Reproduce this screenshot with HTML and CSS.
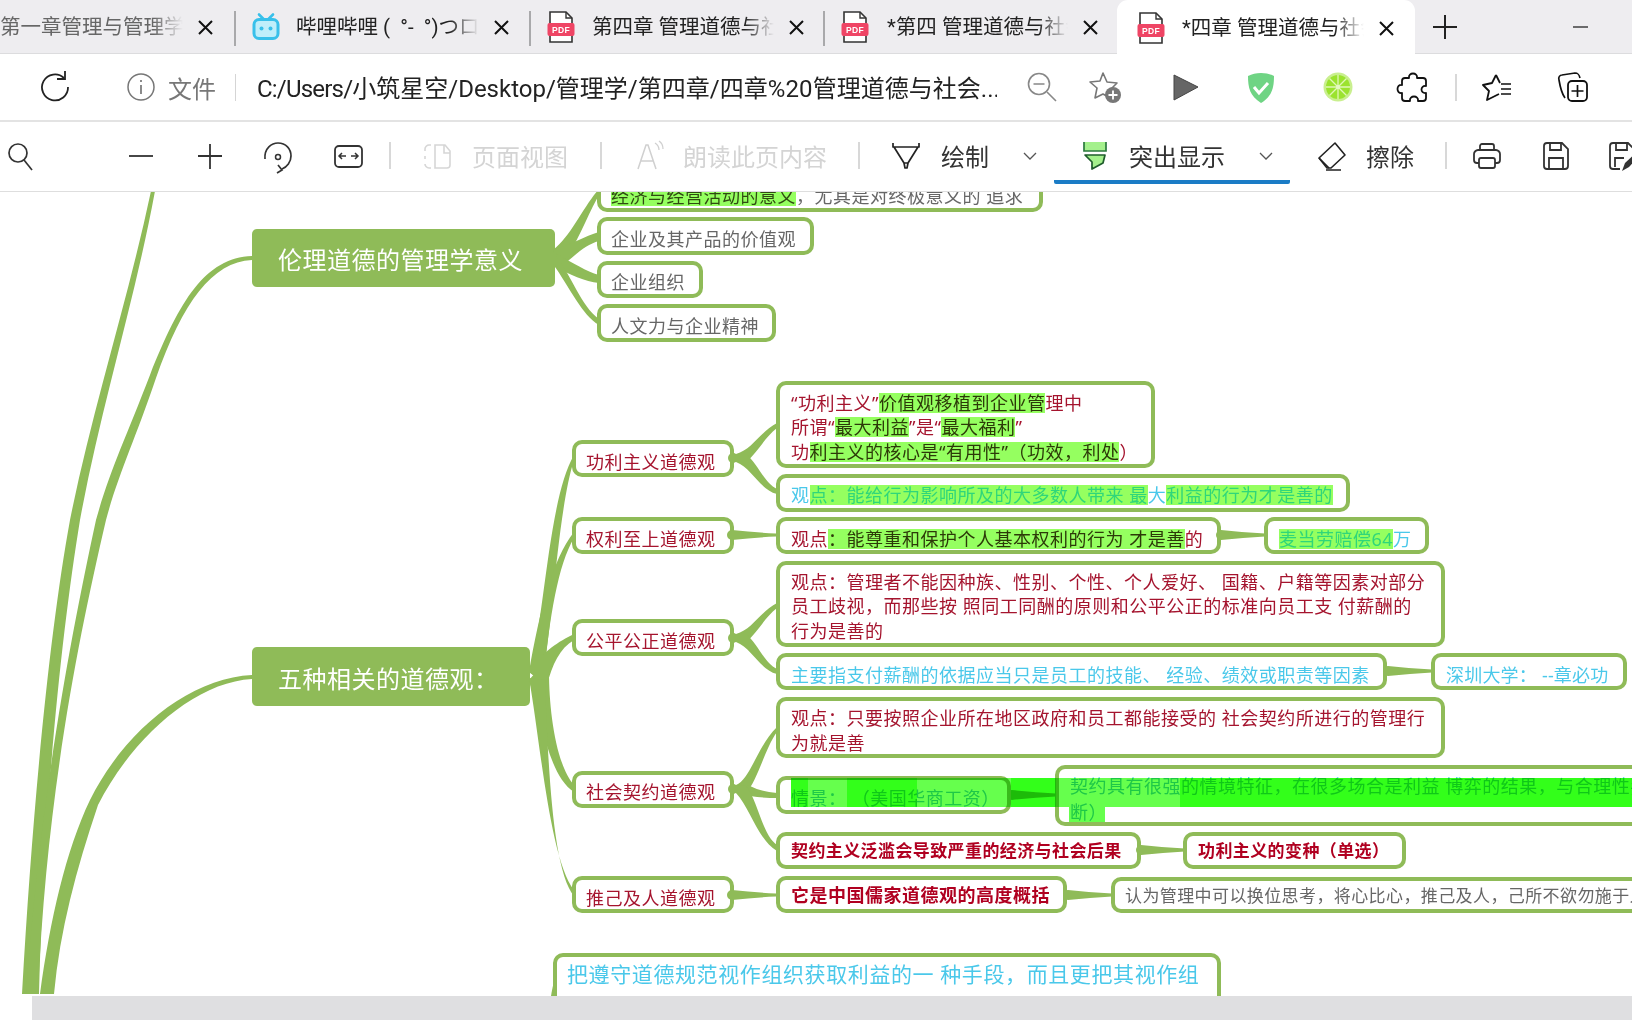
FILE: index.html
```html
<!DOCTYPE html>
<html lang="zh-CN">
<head>
<meta charset="utf-8">
<title>四章 管理道德与社会责任</title>
<link rel="stylesheet" href="styles.css">
</head>
<body>
<div class="app">
  <svg class="defs" width="0" height="0">
    <defs>
      <g id="pdf">
        <path d="M3 1h16l6 6v24H3z" fill="#fff" stroke="#333" stroke-width="1.6"/>
        <path d="M19 1v6h6" fill="none" stroke="#333" stroke-width="1.4"/>
        <rect x="0.5" y="12" width="27" height="13" rx="2" fill="#ef4565"/>
        <text x="14" y="22" class="pdf-text">PDF</text>
      </g>
      <path id="x" d="M1 1l13 13M14 1L1 14" fill="none" stroke="#111" stroke-width="2"/>
      <path id="chev" d="M14 17l6 6 6-6" fill="none" stroke="#555" stroke-width="1.3"/>
    </defs>
  </svg>

  <header class="tabstrip">
    <div class="tab tab-first">
      <span class="title title-dim">第一章管理与管理学概述与管理</span>
      <svg class="close" viewBox="0 0 15 15"><use href="#x"/></svg>
    </div>
    <div class="tab tab-b">
      <svg class="favicon" viewBox="0 0 28 31">
        <path d="M7 3l5 5M21 3l-5 5" stroke="#38c0ea" stroke-width="2.6" stroke-linecap="round"/>
        <rect x="2" y="8" width="24" height="19" rx="5" fill="#bfeefa" stroke="#38c0ea" stroke-width="3"/>
        <circle cx="9.5" cy="17" r="2" fill="#38c0ea"/><circle cx="18.5" cy="17" r="2" fill="#38c0ea"/>
      </svg>
      <span class="title">哔哩哔哩 ( &nbsp;°- &nbsp;°)つロ 干杯~-bilibili</span>
      <svg class="close" viewBox="0 0 15 15"><use href="#x"/></svg>
    </div>
    <div class="tab tab-c">
      <svg class="favicon" viewBox="0 0 28 32"><use href="#pdf"/></svg>
      <span class="title">第四章 管理道德与社会责任</span>
      <svg class="close" viewBox="0 0 15 15"><use href="#x"/></svg>
    </div>
    <div class="tab tab-d">
      <svg class="favicon" viewBox="0 0 28 32"><use href="#pdf"/></svg>
      <span class="title">*第四 管理道德与社会责任</span>
      <svg class="close" viewBox="0 0 15 15"><use href="#x"/></svg>
    </div>
    <div class="tab tab-active">
      <svg class="favicon" viewBox="0 0 28 32"><use href="#pdf"/></svg>
      <span class="title">*四章 管理道德与社会责任</span>
      <svg class="close" viewBox="0 0 15 15"><use href="#x"/></svg>
    </div>
    <svg class="ico new-tab" viewBox="0 0 40 40"><path d="M20 8v24M8 20h24" stroke="#222" stroke-width="2"/></svg>
    <svg class="ico minimize" viewBox="0 0 40 40"><path d="M13 20h15" stroke="#333" stroke-width="1.4"/></svg>
  </header>

  <nav class="addr">
    <svg class="ico a-reload" viewBox="0 0 40 40"><path d="M29 11A13 13 0 1 0 33 20" fill="none" stroke="#222" stroke-width="1.8"/><path d="M30 4v8h-8" fill="none" stroke="#222" stroke-width="1.8"/></svg>
    <svg class="ico a-info" viewBox="0 0 40 40"><circle cx="20" cy="20" r="13" fill="none" stroke="#777" stroke-width="1.5"/><path d="M20 18v9M20 13v2" stroke="#777" stroke-width="1.7"/></svg>
    <span class="a-file">文件</span>
    <span class="vline a-sep1"></span>
    <span class="url"><span class="url-tight">C:/Users/</span>小筑星空/Desktop/管理学/第四章/四章<span class="url-wide">%20</span>管理道德与社会...</span>
    <svg class="ico a-zoom" viewBox="0 0 40 40"><circle cx="17" cy="17" r="10.5" fill="none" stroke="#888" stroke-width="1.6"/><path d="M11.5 17h11M25 25l9 9" stroke="#888" stroke-width="1.6"/></svg>
    <svg class="ico a-star" viewBox="0 0 40 40"><path d="M18 6l4 9 10 1-7 7 2 9-9-5-8 4 2-10-7-6 10-1z" fill="none" stroke="#777" stroke-width="1.6" stroke-linejoin="round"/><circle cx="28" cy="28" r="8" fill="#777"/><path d="M28 23.500v9M23.500 28h9" stroke="#fff" stroke-width="1.8"/></svg>
    <svg class="ico a-play" viewBox="0 0 40 40"><path d="M8 8l24 12L8 33z" fill="#666" stroke="#444" stroke-width="1"/></svg>
    <svg class="ico a-shield" viewBox="0 0 40 40"><path d="M20 6c5 0 9 1 13 3 0 12-2 20-13 27C9 29 7 21 7 9c4-2 8-3 13-3z" fill="#6fd484"/><path d="M13 20l5 6 9-10" fill="none" stroke="#fff" stroke-width="3"/></svg>
    <svg class="ico a-lime" viewBox="0 0 40 40"><circle cx="20" cy="20" r="14.500" fill="#c9ef8f"/><circle cx="20" cy="20" r="12" fill="#9be32f"/><path d="M20 8v24M8 20h24M11.500 11.500l17 17M28.500 11.500l-17 17" stroke="#e0f7b8" stroke-width="1.300"/><circle cx="20" cy="20" r="2" fill="#e6f9c4"/></svg>
    <svg class="ico a-puzzle" viewBox="0 0 40 40"><path d="M16 11c-1-6 9-6 8 0h6c2 0 3 1 3 3v5c-6-1-6 8 0 7v5c0 2-1 3-3 3h-5c1-6-9-6-8 0h-5c-2 0-3-1-3-3v-5c-6 1-6-9 0-8v-4c0-2 1-3 3-3z" fill="none" stroke="#111" stroke-width="1.8" stroke-linejoin="round"/></svg>
    <span class="vline vline-wide a-sep2"></span>
    <svg class="ico a-fav" viewBox="0 0 40 40"><path d="M19 8L15 16 6 18 12 24 10 33 22 27M19 8L23 16" fill="none" stroke="#111" stroke-width="1.8" stroke-linejoin="round"/><path d="M24 17h10M24 22h10M24 27h10" stroke="#111" stroke-width="1.6"/></svg>
    <svg class="ico a-coll" viewBox="0 0 40 40"><path d="M12 31c-3-4-5-12-6-18-1-3 1-5 3-5l13-2c3 0 4 1 5 5" fill="none" stroke="#111" stroke-width="1.7"/><rect x="15" y="14" width="19" height="20" rx="4" fill="#fff" stroke="#111" stroke-width="1.8"/><path d="M24.500 18v12M18.500 24h12" stroke="#111" stroke-width="1.7"/></svg>
  </nav>

  <nav class="tools">
    <svg class="ico t-search" viewBox="0 0 40 40"><circle cx="18" cy="17" r="9" fill="none" stroke="#333" stroke-width="1.7"/><path d="M24 24l8 10" stroke="#333" stroke-width="1.7"/></svg>
    <svg class="ico t-minus" viewBox="0 0 40 40"><path d="M8 20h24" stroke="#333" stroke-width="1.8"/></svg>
    <svg class="ico t-plus" viewBox="0 0 40 40"><path d="M20 8v25M8 20h24" stroke="#333" stroke-width="1.8"/></svg>
    <svg class="ico t-rotate" viewBox="0 0 40 40"><path d="M7 23C6 12 14 7 20 7c8 0 13 6 13 13 0 6-4 11-9 13" fill="none" stroke="#333" stroke-width="1.7"/><circle cx="20" cy="21" r="2.500" fill="none" stroke="#333" stroke-width="1.500"/><path d="M20 29l4 5-5 3" fill="none" stroke="#333" stroke-width="1.700"/></svg>
    <svg class="ico t-fit" viewBox="0 0 40 40"><rect x="7" y="10" width="27" height="21" rx="4" fill="none" stroke="#333" stroke-width="1.800"/><path d="M12 20h6M23 20h6M14 17l-3 3 3 3M27 17l3 3-3 3" fill="none" stroke="#333" stroke-width="1.500"/></svg>
    <span class="vline vline-wide t-sep1"></span>
    <svg class="ico t-page" viewBox="0 0 40 40"><path d="M14 9h-2c-2 0-4 2-4 4v2M8 20v3M8 28c0 2 2 4 4 4h2M18 9h10l5 6v14c0 2-1 3-3 3H18zM27 9v8h6" fill="none" stroke="#d6d6d6" stroke-width="1.600"/></svg>
    <span class="t-text t-off t-pagetext">页面视图</span>
    <span class="vline vline-wide t-sep2"></span>
    <svg class="ico t-read" viewBox="0 0 40 40"><path d="M8 33L16 9h2l8 24M11 25h12" fill="none" stroke="#d0d0d0" stroke-width="1.500"/><path d="M25 7c3 2 4 4 4 7M29 5c3 2 4 5 4 8" fill="none" stroke="#d0d0d0" stroke-width="1.300"/></svg>
    <span class="t-text t-off t-readtext">朗读此页内容</span>
    <span class="vline vline-wide t-sep3"></span>
    <svg class="ico t-draw" viewBox="0 0 40 40"><path d="M7 7v4h26V7M8 11l10 16h4l10-16M18 27l1 5h2l1-5" fill="none" stroke="#222" stroke-width="1.700" stroke-linejoin="round"/></svg>
    <span class="t-text t-drawtext">绘制</span>
    <svg class="ico t-chev1" viewBox="0 0 40 40"><use href="#chev"/></svg>
    <div class="hl-group">
      <svg class="ico t-high" viewBox="0 0 40 40"><path d="M9 6h22v9H9z" fill="#a4f08c"/><path d="M9 6v9h22V6" fill="none" stroke="#2b7a3e" stroke-width="1.700"/><path d="M10 19h20l-2 8-11 6v-7z" fill="#a4f08c" stroke="#1f5c2c" stroke-width="1.700" stroke-linejoin="round"/></svg>
      <span class="t-text t-hightext">突出显示</span>
      <svg class="ico t-chev2" viewBox="0 0 40 40"><use href="#chev"/></svg>
      <span class="hl-bar"></span>
    </div>
    <svg class="ico t-erase" viewBox="0 0 40 40"><path d="M7 22L23 7l10 12-14 13h-4z" fill="none" stroke="#222" stroke-width="1.600" stroke-linejoin="round"/><path d="M7 22l10 10M14 34h15" stroke="#222" stroke-width="1.600"/></svg>
    <span class="t-text t-erasetext">擦除</span>
    <span class="vline vline-wide t-sep4"></span>
    <svg class="ico t-print" viewBox="0 0 40 40"><path d="M13 14V10c0-1 1-2 2-2h10c1 0 2 1 2 2v4M12 27H10c-2 0-3-1-3-3V18c0-2 2-4 4-4h18c2 0 4 2 4 4v6c0 2-1 3-3 3h-2" fill="none" stroke="#333" stroke-width="1.800"/><rect x="12" y="22" width="16" height="10" rx="2" fill="none" stroke="#333" stroke-width="1.800"/></svg>
    <svg class="ico t-save" viewBox="0 0 40 40"><path d="M8 10c0-2 1-3 3-3h15l6 6v17c0 2-1 3-3 3H11c-2 0-3-1-3-3z" fill="none" stroke="#333" stroke-width="1.800"/><path d="M14 7v7h11V7M13 33V22h14v11" fill="none" stroke="#333" stroke-width="1.800"/></svg>
    <svg class="ico t-saveas" viewBox="0 0 40 40"><path d="M18 33h-7c-2 0-3-1-3-3V10c0-2 1-3 3-3h15l6 6v5" fill="none" stroke="#333" stroke-width="1.800"/><path d="M14 7v7h11V7M13 31V22h9" fill="none" stroke="#333" stroke-width="1.800"/><path d="M20 35l3-8 12-11 3 3-11 12z" fill="#333"/></svg>
  </nav>

  <main class="viewer">
    <div class="map">
      <div class="node gray n0"><span class="ln"><span class="hl hl-gray">经济与经营活动的意义</span>，尤其是对终极意义的 追求</span></div>
      <div class="node gray n1"><span class="ln">企业及其产品的价值观</span></div>
      <div class="node gray n2"><span class="ln">企业组织</span></div>
      <div class="node gray n3"><span class="ln">人文力与企业精神</span></div>
      <div class="main-node m1">伦理道德的管理学意义</div>
      <div class="main-node m2">五种相关的道德观：</div>

      <div class="node red c1"><span class="ln">功利主义道德观</span></div>
      <div class="node red c2"><span class="ln">权利至上道德观</span></div>
      <div class="node red c3"><span class="ln">公平公正道德观</span></div>
      <div class="node red c4"><span class="ln">社会契约道德观</span></div>
      <div class="node red c5"><span class="ln">推己及人道德观</span></div>

      <div class="node red d1">
        <span class="ln">“功利主义”<span class="hl">价值观移植到企业管</span>理中</span>
        <span class="ln">所谓“<span class="hl">最大利益</span>”是“<span class="hl">最大福利</span>”</span>
        <span class="ln">功<span class="hl">利主义的核心是“有用性”（功效，利处</span>）</span>
      </div>
      <div class="node cyan d2"><span class="ln">观<span class="hl hl-cyan">点：能给行为影响所及的大多数人带来 最</span>大<span class="hl hl-cyan">利益的行为才是善的</span></span></div>
      <div class="node red d3"><span class="ln">观点<span class="hl">：能尊重和保护个人基本权利的行为 才是善</span>的</span></div>
      <div class="node cyan d4"><span class="ln"><span class="hl hl-cyan">麦当劳赔偿64</span>万</span></div>
      <div class="node red d5">
        <span class="ln">观点：管理者不能因种族、性别、个性、个人爱好、 国籍、户籍等因素对部分</span>
        <span class="ln">员工歧视，而那些按 照同工同酬的原则和公平公正的标准向员工支 付薪酬的</span>
        <span class="ln">行为是善的</span>
      </div>
      <div class="node cyan d6"><span class="ln">主要指支付薪酬的依据应当只是员工的技能、 经验、绩效或职责等因素</span></div>
      <div class="node cyan d7"><span class="ln">深圳大学： --章必功</span></div>
      <div class="node red d8">
        <span class="ln">观点：只要按照企业所在地区政府和员工都能接受的 社会契约所进行的管理行</span>
        <span class="ln">为就是善</span>
      </div>
      <div class="node cyan d9"><span class="ln">情景： （美国华商工资）</span></div>
      <div class="node cyan d10">
        <span class="ln">契约具有很强的情境特征，在很多场合是利益 博弈的结果，与合理性判</span>
        <span class="ln">断）</span>
      </div>
      <div class="node red bold tight d11"><span class="ln">契约主义泛滥会导致严重的经济与社会后果</span></div>
      <div class="node red bold tight d12"><span class="ln">功利主义的变种（单选）</span></div>
      <div class="node red bold d13"><span class="ln">它是中国儒家道德观的高度概括</span></div>
      <div class="node gray bold-pad tight d14"><span class="ln">认为管理中可以换位思考，将心比心，推己及人，己所不欲勿施于人</span></div>
      <div class="node cyan big d15"><span class="ln">把遵守道德规范视作组织获取利益的一 种手段，而且更把其视作组</span></div>

      <svg class="branches" width="1632" height="1020" viewBox="0 0 1632 1020">
        <defs>
          <path id="wedge" d="M0 -5Q22 -2.500 44 -1.500L44 1.500Q22 2.500 0 5A5 5 0 0 1 0 -5Z"/>
          <g id="fan">
            <circle cx="733" cy="458" r="5"/>
            <path d="M736 454C752 450 760 432 777 423L777 428C765 437 758 452 746 462L736 462Z"/>
            <path d="M736 454L746 454C758 464 765 484 777 489L777 494C760 490 752 468 736 462Z"/>
          </g>
        </defs>
        <path d="M151 191C128 300 92 410 70 520C50 630 33 800 22 994L39 994C44 800 62 630 80 520C100 410 135 300 155 191Z"/>
        <path d="M252 256C205 258 180 300 150 375C125 440 110 470 96 520C70 640 40 800 26 994L38 994C46 800 78 640 106 520C118 475 135 440 156 378C183 302 212 262 252 260Z"/>
        <path d="M252 675C190 678 125 730 90 800C66 850 50 920 40 994L54 994C60 930 76 870 98 805C132 738 195 682 252 679Z"/>

        <path d="M553 250C572 235 584 205 600 188L601 192C588 212 578 245 560 266Z"/>
        <path d="M553 250C570 245 585 236 599 232L599 241C585 245 575 255 560 268Z"/>
        <path d="M553 252C572 262 585 271 599 275L599 283C585 282 570 274 553 266Z"/>
        <path d="M553 252C572 275 580 305 599 319L599 325C582 315 570 288 553 264Z"/>

        <path d="M529 672C545 620 548 500 574 455L574 460C558 510 553 620 542 682Z"/>
        <path d="M529 672C540 610 552 560 574 532L574 538C558 565 550 615 543 682Z"/>
        <path d="M529 670C545 650 558 642 574 634L574 640C560 648 552 665 547 685Z"/>
        <path d="M536 672L549 672C549 710 556 765 574 785L574 792C548 775 542 720 529 680Z"/>
        <path d="M529 678C540 740 550 860 574 890L574 896C552 870 548 760 545 680Z"/>

        <use href="#fan"/>
        <use href="#fan" transform="translate(0 180)"/>
        <circle cx="733" cy="789" r="5"/>
        <path d="M736 785C750 780 758 745 777 727L777 732C765 748 758 780 746 793L736 793Z"/>
        <path d="M736 785L750 786C758 790 766 792 777 793L777 798C766 798 750 797 736 793Z"/>
        <path d="M736 786L746 786C758 800 762 835 777 845L777 851C758 840 750 808 736 793Z"/>

        <use href="#wedge" transform="translate(732 535)"/>
        <use href="#wedge" transform="translate(1221 535)"/>
        <use href="#wedge" transform="translate(1388 671)"/>
        <use href="#wedge" transform="translate(1141 850)"/>
        <use href="#wedge" transform="translate(732 895)"/>
        <use href="#wedge" transform="translate(1068 895)"/>
        <use href="#wedge" transform="translate(1012 795)"/>
        <path d="M556 976C553 984 552 990 551 996L556 996L556 976Z"/>
      </svg>

      <span class="band b-dark b1"></span>
      <span class="band b-light b2"></span>
      <span class="band b-dark b3"></span>
      <span class="band b-light b4"></span>
      <span class="band b-dark b5"></span>
      <span class="band b-light b6"></span>
      <span class="band b-dark b7"></span>
      <span class="band b-light b8"></span>
    </div>
  </main>
  <footer class="scrollbar"></footer>
</div>
</body>
</html>
```

FILE: styles.css
```css
* { box-sizing: border-box; }
html, body { margin: 0; padding: 0; background: #fff; }
body { font-family: "Noto Sans", "Noto Sans CJK SC", sans-serif; color: #222; text-spacing-trim: space-all; }
.app { width: 1632px; height: 1020px; overflow: hidden; display: flex; flex-direction: column; }
.defs { position: absolute; }
.pdf-text { font: 700 8.500px "Liberation Sans", sans-serif; fill: #fff; text-anchor: middle; letter-spacing: .4px; }
.ico { width: 40px; height: 40px; flex: none; display: block; }

/* tab strip */
.tabstrip { height: 54px; flex: none; background: #eeedf0; border-bottom: 1px solid #dcdcde; display: flex; align-items: center; }
.tab { height: 54px; flex: none; display: flex; align-items: center; padding-left: 17px; position: relative; }
.tab-first { width: 234px; padding-left: 0; }
.tab-b, .tab-c, .tab-d { border-left: 2px solid #a9a9ab; border-image: linear-gradient(to bottom, transparent 12px, #a9a9ab 12px, #a9a9ab 45px, transparent 45px) 1; padding-left: 16px; }
.tab-b { width: 295px; }
.tab-c { width: 294px; }
.tab-d { width: 294px; }
.tab-active { width: 298px; padding-left: 20px; background: #fff; border-radius: 11px 11px 0 0; align-self: flex-start; height: 55px; }
.favicon { width: 28px; height: 32px; flex: none; margin-right: 16px; }
.title { width: 183px; flex: none; font-family: Roboto, "Noto Sans CJK SC", sans-serif; font-size: 20.500px; line-height: 30px; white-space: nowrap; overflow: hidden; color: #222;
  -webkit-mask-image: linear-gradient(to right, #000 84%, transparent 100%); mask-image: linear-gradient(to right, #000 84%, transparent 100%); }
.tab-c .title { padding-left: 1px; }
.tab-d .title { padding-left: 2px; }
.tab-active .title { padding-left: 1px; }
.title-dim { color: #666; }
.close { width: 15px; height: 15px; flex: none; margin-left: 15px; margin-top: 2px; }
.new-tab { margin-left: 10px; }
.minimize { margin-left: 95px; }

/* address bar */
.addr { height: 68px; flex: none; display: flex; align-items: center; border-bottom: 2px solid #e3e3e3; background: #fff; font-size: 24px; }
.vline { width: 1px; height: 27px; flex: none; background: #d5d5d5; }
.vline-wide { width: 2px; height: 27px; background: #d8d8d8; }
.a-reload { margin-left: 35px; }
.a-info { margin-left: 46px; }
.a-file { margin-left: 7px; width: 49px; color: #777; white-space: nowrap; }
.a-sep1 { margin-left: 18px; }
.url { margin: 0 0 2px 21px; width: 740px; white-space: nowrap; overflow: hidden; color: #222; font-family: Roboto, "Noto Sans CJK SC", sans-serif; }
.url-tight { letter-spacing: -.8px; }
.url-wide { letter-spacing: .2px; }
.a-zoom { margin-left: 25px; }
.a-star { margin-left: 23px; }
.a-play { margin-left: 41px; }
.a-shield { margin-left: 35px; }
.a-lime { margin-left: 37px; }
.a-puzzle { margin-left: 35px; }
.a-sep2 { margin-left: 22px; }
.a-fav { margin-left: 20px; }
.a-coll { margin-left: 36px; }

/* pdf toolbar */
.tools { height: 70px; flex: none; display: flex; align-items: center; border-bottom: 1px solid #dedede; background: #fff; font-size: 24px; padding-bottom: 2px; }
.t-text { white-space: nowrap; color: #333; flex: none; }
.t-off { color: #d4d4d4; }
.t-minus { margin-left: 81px; }
.t-plus { margin-left: 29px; }
.t-rotate { margin-left: 28px; }
.t-fit { margin-left: 30px; }
.t-sep1 { margin-left: 21px; }
.t-page { margin-left: 26px; }
.t-pagetext { margin-left: 15px; width: 96px; }
.t-sep2 { margin-left: 32px; }
.t-read { margin-left: 28px; }
.t-readtext { margin-left: 13px; width: 143px; }
.t-sep3 { margin-left: 32px; }
.t-draw { margin-left: 26px; }
.t-drawtext { margin-left: 15px; width: 48px; }
.t-chev1 { margin-left: 21px; }
.hl-group { margin-left: 4px; width: 236px; height: 69px; flex: none; display: flex; align-items: center; position: relative; padding: 0 0 2px 21px; align-self: flex-start; }
.hl-bar { position: absolute; left: 0; right: 0; bottom: 7px; height: 4px; background: #1b7cc6; border-radius: 0 0 2px 2px; }
.t-hightext { margin-left: 14px; width: 97px; }
.t-chev2 { margin-left: 20px; }
.t-erase { margin-left: 22px; }
.t-erasetext { margin-left: 14px; width: 48px; }
.t-sep4 { margin-left: 31px; }
.t-print { margin-left: 20px; }
.t-save { margin-left: 29px; }
.t-saveas { margin-left: 26px; }

/* viewer: the map is a free canvas, coordinates are page coordinates */
.viewer { flex: 1; position: relative; overflow: hidden; background: #fff; }
.map { position: absolute; left: 0; top: -192px; width: 1632px; height: 1300px; }
.scrollbar { height: 24px; flex: none; margin-left: 32px; background: #dfdfe1; }
.branches { position: absolute; left: 0; top: 0; fill: #8fbb58; }

.node { position: absolute; background: #fff; border: 4px solid #8fbb58; border-radius: 10px; padding: 5.500px 0 0 11px; font-size: 18px; letter-spacing: .5px; line-height: 24.600px; white-space: nowrap; }
.ln { display: block; }
.red { color: #a5142e; }
.gray { color: #666; }
.cyan { color: #4ac8ea; }
.bold { font-weight: 700; color: #b00020; padding-top: 3px; }
.bold-pad { padding-top: 3px; }
.tight { font-size: 17px; letter-spacing: .4px; }
.big { font-size: 21px; letter-spacing: .6px; line-height: 28px; padding-top: 5px; }
.hl { display: inline-block; background: #95ff60; color: #2c3a08; line-height: 20px; }
.hl-cyan { color: #2fd67a; }
.hl-gray { color: #2f4a12; }

.main-node { position: absolute; background: #8fbb58; border-radius: 5px; color: #fff; font-size: 24px; letter-spacing: .5px; white-space: nowrap; display: flex; align-items: center; padding: 1px 0 0 26px; }

.n0 { left: 597px; top: 174px; width: 446px; height: 38px; padding-left: 10px; }
.n1 { left: 597px; top: 217px; width: 217px; height: 38px; padding-left: 10px; }
.n2 { left: 597px; top: 261px; width: 106px; height: 37px; padding-left: 10px; padding-top: 5px; }
.n3 { left: 597px; top: 304px; width: 179px; height: 38px; padding-left: 10px; }
.m1 { left: 252px; top: 229px; width: 303px; height: 58px; }
.m2 { left: 252px; top: 647px; width: 278px; height: 59px; }
.c1 { left: 572px; top: 440px; width: 162px; height: 37px; padding-left: 10px; }
.c2 { left: 572px; top: 517px; width: 162px; height: 37px; padding-left: 10px; }
.c3 { left: 572px; top: 619px; width: 162px; height: 37px; padding-left: 10px; }
.c4 { left: 572px; top: 771px; width: 162px; height: 37px; padding-left: 10px; padding-top: 4.500px; }
.c5 { left: 572px; top: 876px; width: 162px; height: 37px; padding-left: 10px; }
.d1 { left: 776px; top: 381px; width: 379px; height: 87px; }
.d2 { left: 776px; top: 474px; width: 574px; height: 38px; padding-top: 5px; }
.d3 { left: 776px; top: 517px; width: 445px; height: 37px; }
.d4 { left: 1264px; top: 517px; width: 165px; height: 37px; }
.d5 { left: 776px; top: 561px; width: 669px; height: 86px; padding-top: 4.500px; }
.d6 { left: 776px; top: 653px; width: 611px; height: 37px; padding-top: 6px; }
.d7 { left: 1431px; top: 653px; width: 196px; height: 37px; padding-top: 6px; letter-spacing: .2px; }
.d8 { left: 776px; top: 697px; width: 669px; height: 61px; padding-top: 5px; }
.d9 { left: 776px; top: 776px; width: 235px; height: 38px; padding-top: 6px; }
.d10 { left: 1055px; top: 765px; width: 800px; height: 61px; padding-top: 4px; line-height: 26px; }
.d11 { left: 776px; top: 832px; width: 365px; height: 37px; }
.d12 { left: 1183px; top: 832px; width: 223px; height: 37px; }
.d13 { left: 776px; top: 876px; width: 291px; height: 37px; }
.d14 { left: 1111px; top: 877px; width: 800px; height: 36px; padding-left: 10px; }
.d15 { left: 553px; top: 953px; width: 668px; height: 90px; padding-top: 3px; padding-left: 10px; }

.band { position: absolute; mix-blend-mode: multiply; top: 778px; height: 29px; }
.b-dark { background: #33ff1a; }
.b-light { background: #66ff4d; }
.b1 { left: 791px; width: 17px; }
.b2 { left: 808px; width: 39px; }
.b3 { left: 847px; width: 70px; }
.b4 { left: 917px; width: 94px; }
.b5 { left: 1011px; width: 45px; }
.b6 { left: 1056px; width: 124px; }
.b7 { left: 1180px; width: 452px; }
.b8 { left: 1069px; width: 36px; top: 807px; height: 15px; }
```
